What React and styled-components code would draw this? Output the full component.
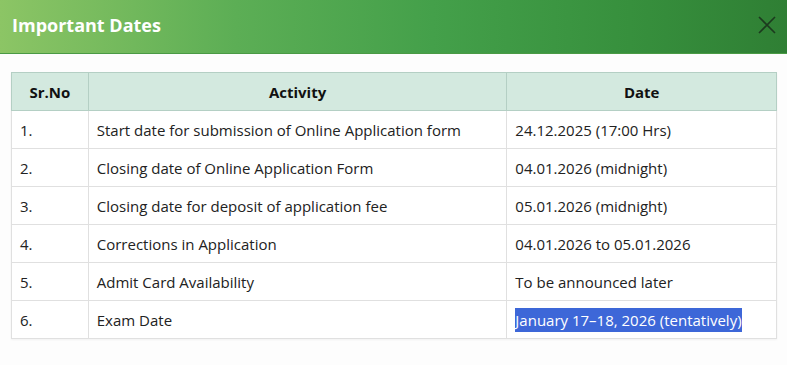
import styled, { createGlobalStyle } from 'styled-components'

const Global = createGlobalStyle`
  html, body { margin: 0; padding: 0; background: #fdfdfd; }
  body { font-family: "Open Sans", "Noto Sans", sans-serif; color: #222; }
`

const Modal = styled.div`
  width: 787px;
  height: 365px;
  background: #fdfdfd;
`

const Header = styled.header`
  height: 54px;
  display: flex;
  align-items: center;
  justify-content: space-between;
  padding: 0 10px 3px 12px;
  box-sizing: border-box;
  background: linear-gradient(90deg, #8cc565 0%, #5cae55 30%, #44a04a 55%, #37903d 80%, #2f7f34 100%);
  border-bottom: 1px solid #4a9a45;
`

const Title = styled.h2`
  margin: 0;
  font-size: 18px;
  font-weight: 700;
  color: #fff;
`

const Close = styled.button`
  width: 20px;
  height: 20px;
  padding: 0;
  border: 0;
  background: none;
  display: flex;
  align-items: center;
  justify-content: center;
`

const Body = styled.div`
  padding: 18px 10px 0 11px;
`

const Table = styled.table`
  width: 766px;
  border-collapse: collapse;
  font-size: 15px;
  box-shadow: 0 1px 2px rgba(0, 0, 0, 0.05);
`

const Th = styled.th`
  height: 38px;
  padding: 0 8px;
  box-sizing: border-box;
  background: #d3e9df;
  border: 1px solid #b4cfc4;
  font-weight: 700;
  color: #111;
  text-align: center;
`

const Td = styled.td`
  height: 38px;
  padding: 0 8px;
  box-sizing: border-box;
  background: #fff;
  border: 1px solid #e0e0e0;
  color: #222;
  white-space: nowrap;
`

const Selected = styled.span`
  background: #3d67d8;
  color: #fff;
  padding: 2px 0;
`

const rows = [
  ['1.', 'Start date for submission of Online Application form', '24.12.2025 (17:00 Hrs)'],
  ['2.', 'Closing date of Online Application Form', '04.01.2026 (midnight)'],
  ['3.', 'Closing date for deposit of application fee', '05.01.2026 (midnight)'],
  ['4.', 'Corrections in Application', '04.01.2026 to 05.01.2026'],
  ['5.', 'Admit Card Availability', 'To be announced later'],
]

export default function App() {
  return (
    <Modal>
      <Global />
      <Header>
        <Title>Important Dates</Title>
        <Close aria-label="Close">
          <svg width="18" height="18" viewBox="0 0 18 18">
            <path d="M1 1L17 17M17 1L1 17" stroke="#1c3a1e" strokeWidth="1.6" />
          </svg>
        </Close>
      </Header>
      <Body>
        <Table>
          <colgroup>
            <col style={{ width: 77 }} />
            <col style={{ width: 419 }} />
            <col style={{ width: 270 }} />
          </colgroup>
          <thead>
            <tr>
              <Th>Sr.No</Th>
              <Th>Activity</Th>
              <Th>Date</Th>
            </tr>
          </thead>
          <tbody>
            {rows.map((r) => (
              <tr key={r[0]}>
                <Td>{r[0]}</Td>
                <Td>{r[1]}</Td>
                <Td>{r[2]}</Td>
              </tr>
            ))}
            <tr>
              <Td>6.</Td>
              <Td>Exam Date</Td>
              <Td>
                <Selected>January 17–18, 2026 (tentatively)</Selected>
              </Td>
            </tr>
          </tbody>
        </Table>
      </Body>
    </Modal>
  )
}
